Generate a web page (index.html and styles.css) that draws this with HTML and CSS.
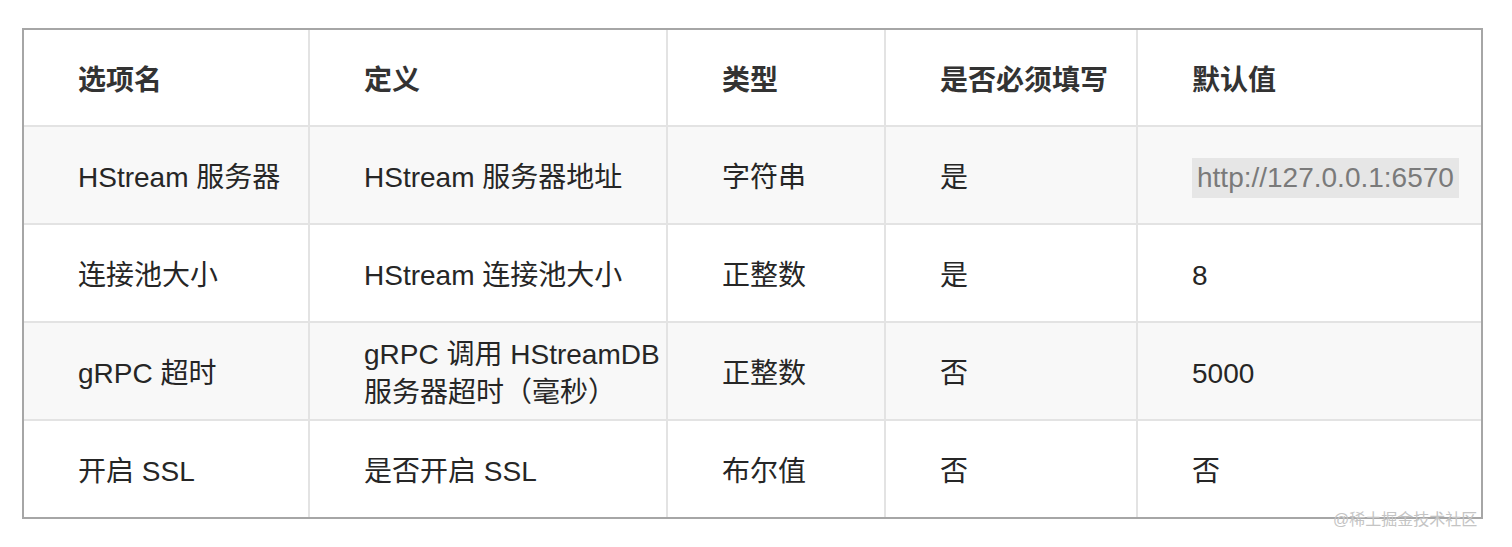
FILE: index.html
```html
<!DOCTYPE html>
<html lang="zh-CN">
<head>
<meta charset="utf-8">
<title>HStream 配置</title>
<link rel="stylesheet" href="styles.css">
</head>
<body>
<div class="page">
  <table class="opts">
    <colgroup>
      <col class="c1"><col class="c2"><col class="c3"><col class="c4"><col class="c5">
    </colgroup>
    <thead>
      <tr><th>选项名</th><th>定义</th><th>类型</th><th>是否必须填写</th><th>默认值</th></tr>
    </thead>
    <tbody>
      <tr class="alt"><td>HStream 服务器</td><td>HStream 服务器地址</td><td>字符串</td><td>是</td><td><code class="code">http://127.0.0.1:6570</code></td></tr>
      <tr><td>连接池大小</td><td>HStream 连接池大小</td><td>正整数</td><td>是</td><td>8</td></tr>
      <tr class="alt"><td>gRPC 超时</td><td>gRPC 调用 HStreamDB 服务器超时（毫秒）</td><td>正整数</td><td>否</td><td>5000</td></tr>
      <tr><td>开启 SSL</td><td>是否开启 SSL</td><td>布尔值</td><td>否</td><td>否</td></tr>
    </tbody>
  </table>
  <div class="watermark">@稀土掘金技术社区</div>
</div>
</body>
</html>
```
FILE: styles.css
```css
html, body {
  margin: 0;
  padding: 0;
  background: #ffffff;
}
.page {
  position: relative;
  width: 1512px;
  height: 547px;
  padding: 28px 0 0 22px;
  box-sizing: border-box;
  font-family: "Liberation Sans", "Noto Sans CJK SC", sans-serif;
  color: #262626;
}
.opts {
  border-collapse: separate;
  border-spacing: 0;
  table-layout: fixed;
  width: 1461px;
  border: 2px solid #a6a6a6;
  font-size: 28px;
  line-height: 38px;
}
.c1 { width: 286px; }
.c2 { width: 358px; }
.c3 { width: 218px; }
.c4 { width: 252px; }
.c5 { width: 343px; }
.opts th, .opts td {
  border-right: 2px solid #e3e3e3;
  border-bottom: 2px solid #e3e3e3;
  padding: 6px 2px 0 54px;
  text-align: left;
  vertical-align: middle;
}
.opts th:last-child, .opts td:last-child {
  border-right: none;
}
.opts tbody tr:last-child td {
  border-bottom: none;
}
.opts th {
  height: 89px;
  font-weight: 700;
  color: #333333;
  background: #ffffff;
}
.opts td {
  height: 90px;
  background: #ffffff;
}
.opts tr.alt td {
  background: #f8f8f8;
}
.code {
  font-family: "Liberation Sans", Arial, sans-serif;
  font-size: 28px;
  color: #7a7a7a;
  background: #e6e6e6;
  padding: 4px 5px 5px 5px;
}
.watermark {
  position: absolute;
  left: 1333px;
  top: 509px;
  font-size: 16px;
  line-height: 22px;
  color: #c4c4c4;
  white-space: nowrap;
}
```
